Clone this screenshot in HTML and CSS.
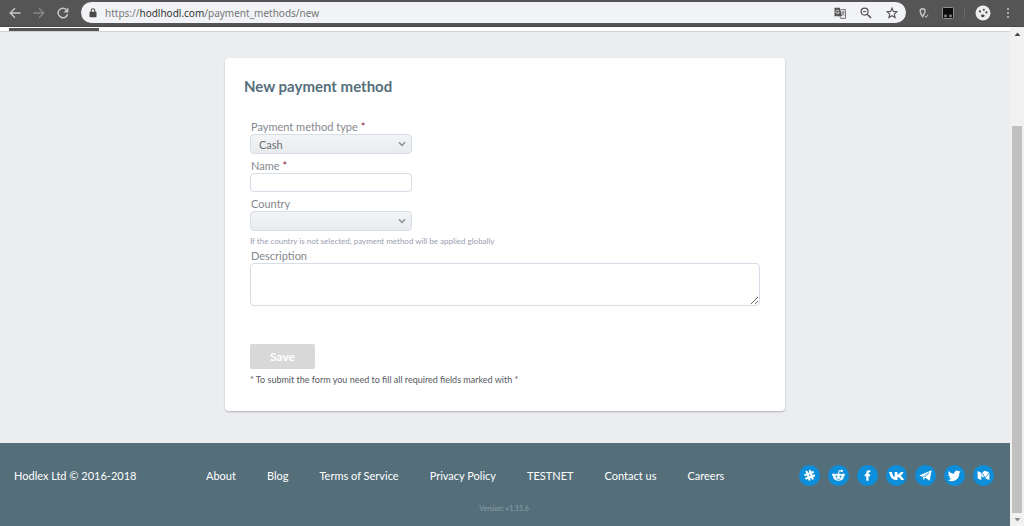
FILE: index.html
```html
<!DOCTYPE html>
<html lang="en">
<head>
    <meta charset="UTF-8">
    <meta name="viewport" content="width=device-width, initial-scale=1.0">
    <title>New payment method</title>
    <link rel="stylesheet" href="styles.css">
</head>
<body>
    <!-- Browser toolbar -->
    <div class="toolbar">
        <button type="button" class="tool-btn" aria-label="Back">
            <svg width="12" height="12" viewBox="0 0 12 12" fill="none" stroke="#c8c8c8" stroke-width="1.4"><path d="M11.5 6H1.5M6 1.2L1.2 6L6 10.8"/></svg>
        </button>
        <button type="button" class="tool-btn" aria-label="Forward">
            <svg width="12" height="12" viewBox="0 0 12 12" fill="none" stroke="#858585" stroke-width="1.4"><path d="M0.5 6h10M6 1.2L10.8 6L6 10.8"/></svg>
        </button>
        <button type="button" class="tool-btn" aria-label="Reload">
            <svg width="12" height="12" viewBox="0 0 12 12" fill="none" stroke="#c8c8c8" stroke-width="1.5"><path d="M10.6 7.2A4.8 4.8 0 1 1 9.4 2.6"/><path d="M11.4 0.4v5H6.4z" fill="#c8c8c8" stroke="none"/></svg>
        </button>
        <div class="address-bar">
            <svg class="lock" width="8" height="10" viewBox="0 0 8 10"><rect x="0.5" y="3.8" width="7" height="5.4" rx="0.8" fill="#4a4a4a"/><path d="M2.2 4V2.6a1.8 1.8 0 0 1 3.6 0V4" fill="none" stroke="#4a4a4a" stroke-width="1.1"/></svg>
            <span class="url">https://<b>hodlhodl.com</b>/payment_methods/new</span>
            <button type="button" class="tool-btn" aria-label="Translate">
                <svg width="12" height="12" viewBox="0 0 12 12"><path d="M0.5 0.8h5.3l2.3 8.4H0.5z" fill="#555"/><path d="M6.5 2.6h5v8.8H6.7L6 9.4" fill="none" stroke="#666" stroke-width="0.9"/><path d="M7.3 5h3.4M9 4v1M10 5c-0.4 1.8-1.2 2.8-2.2 3.6M8 6l2.5 2.8" fill="none" stroke="#666" stroke-width="0.8"/><path d="M5 3.9A1.7 1.7 0 1 0 5.2 5.4H3.7" fill="none" stroke="#f1f3f6" stroke-width="0.8"/></svg>
            </button>
            <button type="button" class="tool-btn" aria-label="Zoom">
                <svg width="12" height="12" viewBox="0 0 12 12" fill="none" stroke="#555" stroke-width="1.2"><circle cx="4.6" cy="4.6" r="3.5"/><path d="M7.2 7.2L11 11" stroke-width="1.6"/><path d="M2.9 4.6h3.4" stroke-width="1"/></svg>
            </button>
            <button type="button" class="tool-btn" aria-label="Bookmark">
                <svg width="12" height="12" viewBox="0 0 12 12" fill="none" stroke="#555" stroke-width="1.1"><path d="M6 1.1L7.4 4.4L11 4.7L8.3 7.1L9.1 10.6L6 8.7L2.9 10.6L3.7 7.1L1 4.7L4.6 4.4z"/></svg>
            </button>
        </div>
        <div class="extensions">
            <button type="button" class="tool-btn" aria-label="Location extension">
                <svg width="12" height="12" viewBox="0 0 12 12" fill="none" stroke="#c4c4c4"><path d="M4.6 9.6C2.8 7 2.2 5.6 2.2 4.2a2.4 2.4 0 0 1 4.8 0C7 5.6 6.4 7 4.6 9.6z" stroke-width="1.5"/><path d="M7 9l1.2 1.4L10 7.6" stroke-width="1"/></svg>
            </button>
            <button type="button" class="tool-btn" aria-label="Script extension">
                <svg width="12" height="12" viewBox="0 0 12 12"><rect x="0.5" y="0.5" width="11" height="11" rx="1" fill="#0c0c0c" stroke="#8d8d8d"/><rect x="2" y="7.6" width="3" height="2.6" rx="0.8" fill="#777"/><rect x="7" y="7.6" width="3" height="2.6" rx="0.8" fill="#777"/></svg>
            </button>
            <span class="divider"></span>
            <button type="button" class="tool-btn" aria-label="Profile">
                <svg width="16" height="16" viewBox="0 0 16 16"><circle cx="8" cy="8" r="7.5" fill="#ededed"/><circle cx="5" cy="6.4" r="1.1" fill="#444"/><circle cx="8.8" cy="4.8" r="1" fill="#444"/><circle cx="11.4" cy="7.4" r="1.1" fill="#444"/><ellipse cx="7.8" cy="10.8" rx="1.8" ry="1.4" fill="#444"/></svg>
            </button>
            <button type="button" class="tool-btn menu-btn" aria-label="Menu">
                <svg width="4" height="12" viewBox="0 0 4 12" fill="#c4c4c4"><circle cx="2" cy="2" r="1"/><circle cx="2" cy="6" r="1"/><circle cx="2" cy="10" r="1"/></svg>
            </button>
        </div>
    </div>

    <div class="window">
        <div class="page">
            <div class="tabs"><span class="active-tab"></span></div>

            <!-- Form Section -->
            <main>
                <form class="card">
                    <h1>New payment method</h1>
                    <div class="fields">
                        <div class="form-group">
                            <label for="type">Payment method type <span class="required">*</span></label>
                            <div class="select-box">
                                <select id="type" name="type" required>
                                    <option>Cash</option>
                                </select>
                                <svg class="chevron" width="8" height="6" viewBox="0 0 8 6" fill="none" stroke="#8a8d92" stroke-width="1.4"><path d="M1 1.2L4 4.4L7 1.2"/></svg>
                            </div>
                        </div>
                        <div class="form-group">
                            <label for="name">Name <span class="required">*</span></label>
                            <input type="text" id="name" name="name" required>
                        </div>
                        <div class="form-group">
                            <label for="country">Country</label>
                            <div class="select-box">
                                <select id="country" name="country">
                                    <option></option>
                                </select>
                                <svg class="chevron" width="8" height="6" viewBox="0 0 8 6" fill="none" stroke="#8a8d92" stroke-width="1.4"><path d="M1 1.2L4 4.4L7 1.2"/></svg>
                            </div>
                        </div>
                        <p class="hint">If the country is not selected, payment method will be applied globally</p>
                        <div class="form-group">
                            <label for="description">Description</label>
                            <textarea id="description" name="description"></textarea>
                        </div>
                        <button type="submit" class="save-btn" disabled>Save</button>
                        <p class="note">* To submit the form you need to fill all required fields marked with *</p>
                    </div>
                </form>
            </main>

            <footer>
                <div class="footer-row">
                    <span class="copyright">Hodlex Ltd © 2016-2018</span>
                    <nav>
                        <a href="#">About</a>
                        <a href="#">Blog</a>
                        <a href="#">Terms of Service</a>
                        <a href="#">Privacy Policy</a>
                        <a href="#">TESTNET</a>
                        <a href="#">Contact us</a>
                        <a href="#">Careers</a>
                    </nav>
                    <div class="social">
                        <a href="#" aria-label="Slack"><svg viewBox="0 0 20 20"><g fill="none" stroke="#fff" stroke-width="2" stroke-linecap="round"><path d="M7.2 6.4L10 14M10.4 5.6L13 13M5.8 9.4L13.2 6.8M6.8 12.8L14.4 10"/></g></svg></a>
                        <a href="#" aria-label="Reddit"><svg viewBox="0 0 20 20"><ellipse cx="10" cy="11.6" rx="4.9" ry="3.5" fill="#fff"/><circle cx="5.3" cy="9.6" r="1.4" fill="#fff"/><circle cx="14.7" cy="9.6" r="1.4" fill="#fff"/><circle cx="13.1" cy="5.7" r="1.1" fill="#fff"/><path d="M10 8.4L10.6 5.2L13 5.7" fill="none" stroke="#fff" stroke-width="0.9"/><circle cx="8.1" cy="10.9" r="0.9" fill="#0d8edb"/><circle cx="11.9" cy="10.9" r="0.9" fill="#0d8edb"/><path d="M8 13c1.2 0.9 2.8 0.9 4 0" fill="none" stroke="#0d8edb" stroke-width="0.8"/></svg></a>
                        <a href="#" aria-label="Facebook"><svg viewBox="0 0 20 20"><path d="M8.8 15V10.8H7.3V8.7H8.8V7.3C8.8 5.7 9.7 4.9 11.2 4.9H12.7V6.9H11.8C11.1 6.9 11 7.2 11 7.7V8.7H12.7L12.4 10.8H11V15z" fill="#fff"/></svg></a>
                        <a href="#" aria-label="VK"><svg viewBox="0 0 20 20"><path d="M10 14.2C6 14.2 4 11.4 2.9 6.6H5.6C6 9 6.9 10.8 8.3 11.5V6.6H10.9V9.2C12.2 8.8 13.2 7.9 13.9 6.6H16.6C16.1 8.2 15.1 9.4 13.8 10.2C15.4 11 16.5 12.3 17.1 14.2H14.3C13.6 12.8 12.5 11.8 10.9 11.5V14.2z" fill="#fff"/></svg></a>
                        <a href="#" aria-label="Telegram"><svg viewBox="0 0 20 20"><path d="M3.9 9.9L15.9 5.1L13.9 14.9L9.9 12.2L8 14.2L7.5 11.2z" fill="#fff"/><path d="M7.7 11.4L13.6 7.2L9 12" fill="none" stroke="#0d8edb" stroke-width="0.6"/></svg></a>
                        <a href="#" aria-label="Twitter"><svg viewBox="0 0 20 20"><path d="M15.9 6.3C15.5 6.5 15 6.6 14.6 6.7C15.1 6.4 15.4 6 15.6 5.4C15.1 5.7 14.6 5.9 14 6A2.6 2.6 0 0 0 9.7 8.3C7.6 8.2 5.7 7.2 4.5 5.6C3.8 6.8 4.1 8.3 5.3 9.1C4.9 9.1 4.5 9 4.1 8.8C4.1 10 4.9 11.1 6.2 11.4C5.8 11.5 5.4 11.5 5 11.4C5.3 12.5 6.3 13.2 7.4 13.2C6.4 14 5 14.4 3.7 14.3C9 17.4 14.7 13.8 14.6 7.7C15.1 7.3 15.5 6.8 15.9 6.3z" fill="#fff"/></svg></a>
                        <a href="#" aria-label="Medium"><svg viewBox="0 0 20 20"><path d="M4.4 5.8L7.9 7.4V14.4L4.4 12.8zM8.3 7.4L11 12.2L8.3 11zM8.8 7.2L11.2 5.4L15.2 7L11.8 12zM12 12.4L15.6 7.6V14.4L12 12.9z" fill="#fff"/></svg></a>
                    </div>
                </div>
                <p class="version">Version: v1.15.6</p>
            </footer>
        </div>

        <div class="scrollbar">
            <svg width="7" height="4" viewBox="0 0 7 4"><path d="M0.5 4L3.5 0.5L6.5 4z" fill="#4a4a4a"/></svg>
            <div class="track"><div class="thumb"></div></div>
            <svg width="7" height="4" viewBox="0 0 7 4"><path d="M0.5 0L3.5 3.5L6.5 0z" fill="#8a8a8a"/></svg>
        </div>
    </div>
</body>
</html>
```

FILE: styles.css
```css
* {
    box-sizing: border-box;
}
body {
    margin: 0;
    min-height: 100vh;
    display: flex;
    flex-direction: column;
    font-family: Lato, sans-serif;
    font-size: 11px;
    background: #ebedf0;
}
p, h1 {
    margin: 0;
}

/* Toolbar */
.toolbar {
    display: flex;
    align-items: center;
    gap: 12px;
    height: 27px;
    padding: 0 14px 1px 9px;
    background: #555;
    border-bottom: 1px solid #484848;
}
.tool-btn {
    display: flex;
    padding: 0;
    border: none;
    background: none;
}
.address-bar {
    flex: 1;
    display: flex;
    align-items: center;
    gap: 14px;
    height: 21px;
    padding: 0 8px;
    border-radius: 11px;
    background: #f1f3f6;
}
.lock {
    margin-right: -6px;
}
.url {
    flex: 1;
    font-family: "Noto Sans", sans-serif;
    font-size: 10px;
    color: #777;
}
.url b {
    font-weight: normal;
    color: #333;
}
.extensions {
    display: flex;
    align-items: center;
    gap: 12px;
}
.divider {
    width: 1px;
    height: 12px;
    margin: 0 -2px;
    background: #6a6a6a;
}
.menu-btn {
    margin-left: 3px;
}

/* Page */
.window {
    flex: 1;
    display: flex;
}
.page {
    flex: 1;
    display: flex;
    flex-direction: column;
}
.tabs {
    height: 5px;
    padding: 1px 9px 0;
    background: #fff;
    border-bottom: 1px solid #ced2d5;
}
.active-tab {
    display: block;
    width: 90px;
    height: 3px;
    background: #555;
}
main {
    flex: 1;
    padding: 26px 20px 32px;
}
.card {
    max-width: 560px;
    margin: 0 auto;
    padding: 18px 25px 24px 19px;
    background: #fff;
    border-radius: 4px;
    box-shadow: 0 1px 2px rgba(0,0,0,0.25);
}
h1 {
    font-size: 15px;
    line-height: 20px;
    color: #546e7a;
}
.fields {
    padding: 24px 0 0 6px;
}
.form-group {
    margin-bottom: 5px;
}
label {
    display: block;
    padding-left: 1px;
    line-height: 14px;
    color: #85898e;
}
.required {
    color: #8e2442;
}
.select-box {
    display: grid;
    align-items: center;
    width: 162px;
}
.select-box select, .chevron {
    grid-area: 1 / 1;
}
.chevron {
    justify-self: end;
    margin-right: 6px;
    pointer-events: none;
}
select, input, textarea {
    display: block;
    border: 1px solid #d5dde6;
    border-radius: 4px;
    font-family: inherit;
    font-size: 11px;
    color: #6c7075;
    background: #fff;
}
select {
    appearance: none;
    width: 100%;
    height: 20px;
    padding: 0 8px;
    background: linear-gradient(#f3f4f6, #e9ebee);
}
input {
    width: 162px;
    height: 19px;
    padding: 0 8px;
}
textarea {
    width: 100%;
    height: 43px;
    resize: vertical;
}
.hint {
    margin-bottom: 3px;
    font-size: 8px;
    line-height: 10px;
    color: #9a9eb0;
}
.save-btn {
    display: block;
    width: 65px;
    height: 25px;
    margin-top: 38px;
    border: none;
    border-radius: 2px;
    font-family: inherit;
    font-size: 12px;
    font-weight: bold;
    color: #fff;
    background: #d8d8d8;
}
.note {
    padding-top: 4px;
    font-size: 9px;
    line-height: 14px;
    color: #55595e;
}

/* Footer */
footer {
    padding: 22px 16px 12px 14px;
    color: #fff;
    background: #546e7a;
}
.footer-row {
    display: flex;
    align-items: center;
}
footer a {
    color: #fff;
    text-decoration: none;
}
.copyright {
    width: 192px;
}
nav {
    display: flex;
    gap: 31px;
}
.social {
    display: flex;
    gap: 8px;
    margin-left: auto;
}
.social a {
    width: 21px;
    height: 21px;
    border-radius: 50%;
    background: #0d8edb;
}
.social svg {
    display: block;
}
.version {
    padding-top: 16px;
    font-size: 7px;
    line-height: 12px;
    text-align: center;
    color: #8fa1aa;
}

/* Scrollbar */
.scrollbar {
    display: flex;
    flex-direction: column;
    align-items: center;
    width: 14px;
    padding: 5px 0 4px;
    background: #f1f1f1;
}
.track {
    flex: 1;
    display: flex;
    align-items: flex-end;
    padding: 5px 0;
}
.thumb {
    width: 10px;
    height: 82%;
    background: #c1c1c1;
}
```
